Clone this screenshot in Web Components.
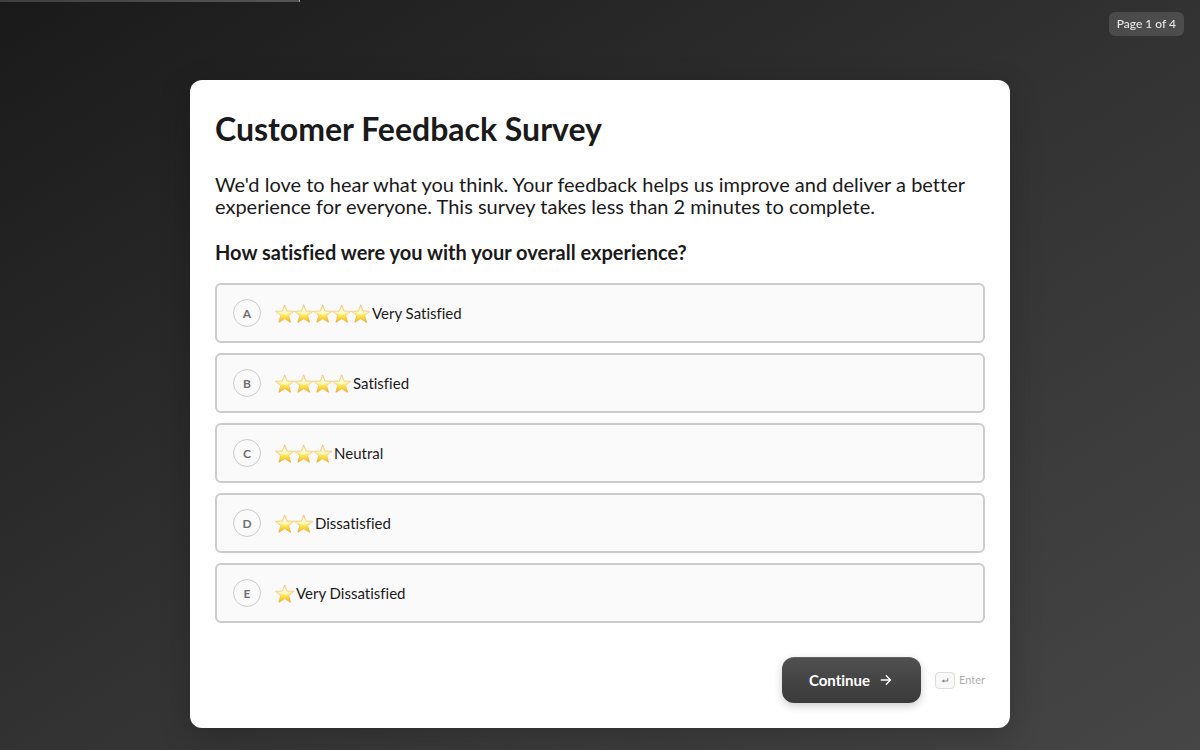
<!DOCTYPE html>
<html lang="en">
<head>
<meta charset="utf-8">
<meta name="viewport" content="width=device-width, initial-scale=1">
<title>Customer Feedback Survey</title>
<style>
  html {
    min-height: 100%;
    background: linear-gradient(to bottom right, #1a1a1a 0%, #323232 50%, #464646 100%);
  }
  body {
    margin: 0;
    font-family: Lato, sans-serif;
    font-variant-ligatures: none;
    color: #1a1a1a;
  }
</style>
</head>
<body>
<survey-page>
  <survey-progress slot="progress" page="1" pages="4"></survey-progress>
  <survey-card>
    <span slot="title">Customer Feedback Survey</span>
    <span slot="intro">We'd love to hear what you think. Your feedback helps us improve and deliver a better experience for everyone. This survey takes less than 2 minutes to complete.</span>
    <survey-question>
      <span slot="question">How satisfied were you with your overall experience?</span>
      <survey-option letter="A" stars="5">Very Satisfied</survey-option>
      <survey-option letter="B" stars="4">Satisfied</survey-option>
      <survey-option letter="C" stars="3">Neutral</survey-option>
      <survey-option letter="D" stars="2">Dissatisfied</survey-option>
      <survey-option letter="E" stars="1">Very Dissatisfied</survey-option>
    </survey-question>
    <survey-actions slot="actions">Continue</survey-actions>
  </survey-card>
</survey-page>

<script>
function makeTemplate(html) {
  const template = document.createElement("template");
  template.innerHTML = html;
  return template;
}

const pageTemplate = makeTemplate(`
<style>
  :host {
    display: block;
  }
  main {
    max-width: 820px;
    margin: 0 auto;
    padding: 80px 20px 22px;
  }
</style>
<slot name="progress"></slot>
<main><slot></slot></main>
`);

class SurveyPage extends HTMLElement {
  constructor() {
    super();
    this.attachShadow({ mode: "open" }).appendChild(pageTemplate.content.cloneNode(true));
  }
}

const progressTemplate = makeTemplate(`
<style>
  :host {
    display: block;
  }
  .track {
    position: fixed;
    top: 0;
    left: 0;
    right: 0;
    height: 2px;
  }
  .bar {
    box-sizing: border-box;
    height: 100%;
    background: linear-gradient(90deg, #404040, #555);
    border-right: 1px solid #a6a6a6;
  }
  .badge {
    position: fixed;
    top: 12px;
    right: 16px;
    padding: 4px 8px;
    border-radius: 6px;
    background: rgba(255, 255, 255, 0.13);
    color: #e8e8e8;
    font-size: 12px;
    font-weight: 500;
    line-height: 16px;
  }
</style>
<div class="track" role="progressbar" aria-label="Survey progress"><div class="bar"></div></div>
<div class="badge"></div>
`);

class SurveyProgress extends HTMLElement {
  constructor() {
    super();
    this.attachShadow({ mode: "open" }).appendChild(progressTemplate.content.cloneNode(true));
  }

  connectedCallback() {
    const page = Number(this.getAttribute("page"));
    const pages = Number(this.getAttribute("pages"));
    this.shadowRoot.querySelector(".bar").style.width = (page / pages) * 100 + "%";
    this.shadowRoot.querySelector(".badge").textContent = `Page ${page} of ${pages}`;
  }
}

const cardTemplate = makeTemplate(`
<style>
  :host {
    display: block;
    padding: 25px;
    border-radius: 12px;
    background: #fff;
    box-shadow: 0 8px 32px rgba(0, 0, 0, 0.2);
  }
  h1 {
    margin: 0 0 20px;
    font-size: 32px;
    font-weight: 700;
    line-height: 48px;
  }
  p {
    margin: 0 0 24px;
    font-size: 20px;
    line-height: 22px;
  }
</style>
<h1><slot name="title"></slot></h1>
<p><slot name="intro"></slot></p>
<slot></slot>
<slot name="actions"></slot>
`);

class SurveyCard extends HTMLElement {
  constructor() {
    super();
    this.attachShadow({ mode: "open" }).appendChild(cardTemplate.content.cloneNode(true));
  }
}

const questionTemplate = makeTemplate(`
<style>
  :host {
    display: block;
  }
  h2 {
    margin: 0 0 20px;
    font-size: 20px;
    font-weight: 700;
    line-height: 22px;
  }
  .options {
    display: flex;
    flex-direction: column;
    gap: 10px;
  }
</style>
<h2 id="question"><slot name="question"></slot></h2>
<div class="options" role="radiogroup" aria-labelledby="question"><slot></slot></div>
`);

class SurveyQuestion extends HTMLElement {
  constructor() {
    super();
    this.attachShadow({ mode: "open" }).appendChild(questionTemplate.content.cloneNode(true));
  }

  connectedCallback() {
    // each radio lives in its own shadow root, so the group is kept here
    this.addEventListener("option-selected", (event) => {
      this.querySelectorAll("survey-option").forEach((option) => {
        if (option !== event.target) option.clear();
      });
    });
  }
}

const optionTemplate = makeTemplate(`
<style>
  :host {
    display: block;
  }
  label {
    position: relative;
    display: flex;
    align-items: center;
    gap: 14px;
    padding: 14px 16px;
    border: 2px solid #ccc;
    border-radius: 6px;
    background: #fafafa;
    cursor: pointer;
  }
  label:hover {
    border-color: #999;
  }
  label:has(input:checked) {
    border-color: #404040;
    background: #f0f0f0;
  }
  input {
    position: absolute;
    inset: 0;
    width: 100%;
    height: 100%;
    margin: 0;
    opacity: 0;
    cursor: pointer;
  }
  .letter {
    display: flex;
    align-items: center;
    justify-content: center;
    box-sizing: border-box;
    width: 28px;
    height: 28px;
    border: 1px solid #ccc;
    border-radius: 50%;
    color: #707070;
    font-size: 12px;
    font-weight: 700;
  }
  .answer {
    display: flex;
    align-items: center;
    gap: 2px;
    font-size: 15px;
    line-height: 28px;
  }
  .stars {
    display: flex;
  }
  svg {
    display: block;
    width: 19px;
    height: 20px;
    overflow: visible;
  }
</style>
<label>
  <input type="radio" name="answer">
  <span class="letter"></span>
  <span class="answer"><span class="stars" aria-hidden="true"></span><span><slot></slot></span></span>
</label>
`);

const starTemplate = makeTemplate(`
<svg viewBox="0 0 19 20">
  <defs>
    <linearGradient id="gold" x1="0" y1="0" x2="0" y2="1">
      <stop offset="0" stop-color="#ffe995"/>
      <stop offset="0.3" stop-color="#fff8c4"/>
      <stop offset="0.52" stop-color="#fff07c"/>
      <stop offset="0.78" stop-color="#fdd327"/>
      <stop offset="1" stop-color="#f7b414"/>
    </linearGradient>
    <linearGradient id="rim" x1="0" y1="0" x2="0" y2="1">
      <stop offset="0" stop-color="#f2b56c"/>
      <stop offset="0.5" stop-color="#f5cb92"/>
      <stop offset="1" stop-color="#eca62e"/>
    </linearGradient>
  </defs>
  <path d="M9.7 1.9 12 8 19 8.3 13.6 12.5 15.5 19.3 9.7 15.6 3.9 19.3 5.8 12.5 0.4 8.3 7.4 8Z" fill="url(#gold)" stroke="url(#rim)" stroke-width="0.8" stroke-linejoin="round"/>
  <path d="M9.7 4.5 11.2 9 15.6 9.3 9.7 12 3.8 9.3 8.2 9Z" fill="#fffce0" opacity="0.7"/>
</svg>
`);

class SurveyOption extends HTMLElement {
  constructor() {
    super();
    this.attachShadow({ mode: "open" }).appendChild(optionTemplate.content.cloneNode(true));
  }

  connectedCallback() {
    const root = this.shadowRoot;
    root.querySelector(".letter").textContent = this.getAttribute("letter");
    const stars = root.querySelector(".stars");
    for (let i = 0; i < Number(this.getAttribute("stars")); i++) {
      stars.appendChild(starTemplate.content.cloneNode(true));
    }
    root.querySelector("input").addEventListener("change", () => {
      this.dispatchEvent(new CustomEvent("option-selected", { bubbles: true }));
    });
  }

  clear() {
    this.shadowRoot.querySelector("input").checked = false;
  }
}

const actionsTemplate = makeTemplate(`
<style>
  :host {
    display: flex;
    align-items: center;
    justify-content: flex-end;
    gap: 14px;
    margin-top: 34px;
  }
  button {
    display: flex;
    align-items: center;
    gap: 8px;
    padding: 12px 27px;
    border: 0;
    border-radius: 12px;
    background: linear-gradient(180deg, #505050, #3a3a3a);
    box-shadow: 0 3px 8px rgba(0, 0, 0, 0.2), inset 0 1px 0 rgba(255, 255, 255, 0.1);
    color: #fff;
    font-family: inherit;
    font-size: 15px;
    font-weight: 700;
    font-variant-ligatures: none;
    line-height: 22px;
    cursor: pointer;
  }
  button svg {
    width: 16px;
    height: 16px;
  }
  .hint {
    display: flex;
    align-items: center;
    gap: 4px;
    color: #b0b0b0;
    font-size: 11px;
    line-height: 16px;
  }
  kbd {
    display: flex;
    align-items: center;
    justify-content: center;
    box-sizing: border-box;
    width: 20px;
    height: 17px;
    border: 1px solid #ddd;
    border-radius: 4px;
    background: #f8f8f8;
  }
  kbd svg {
    width: 8px;
    height: 8px;
  }
</style>
<button type="button">
  <slot></slot>
  <svg viewBox="0 0 16 16" fill="none" stroke="#fff" stroke-width="1.4" stroke-linecap="round" stroke-linejoin="round" aria-hidden="true">
    <path d="M3.3 8h9.2M8.3 3.8 12.5 8 8.3 12.2"/>
  </svg>
</button>
<span class="hint">
  <kbd aria-hidden="true"><svg viewBox="0 0 8 8"><path d="M6.8 2.2V5H2.5" fill="none" stroke="#888" stroke-width="1"/><path d="M0.6 5 3.2 3.2V6.8Z" fill="#888"/></svg></kbd>
  <span>Enter</span>
</span>
`);

class SurveyActions extends HTMLElement {
  constructor() {
    super();
    this.attachShadow({ mode: "open" }).appendChild(actionsTemplate.content.cloneNode(true));
  }
}

customElements.define("survey-page", SurveyPage);
customElements.define("survey-progress", SurveyProgress);
customElements.define("survey-card", SurveyCard);
customElements.define("survey-question", SurveyQuestion);
customElements.define("survey-option", SurveyOption);
customElements.define("survey-actions", SurveyActions);
</script>
</body>
</html>
